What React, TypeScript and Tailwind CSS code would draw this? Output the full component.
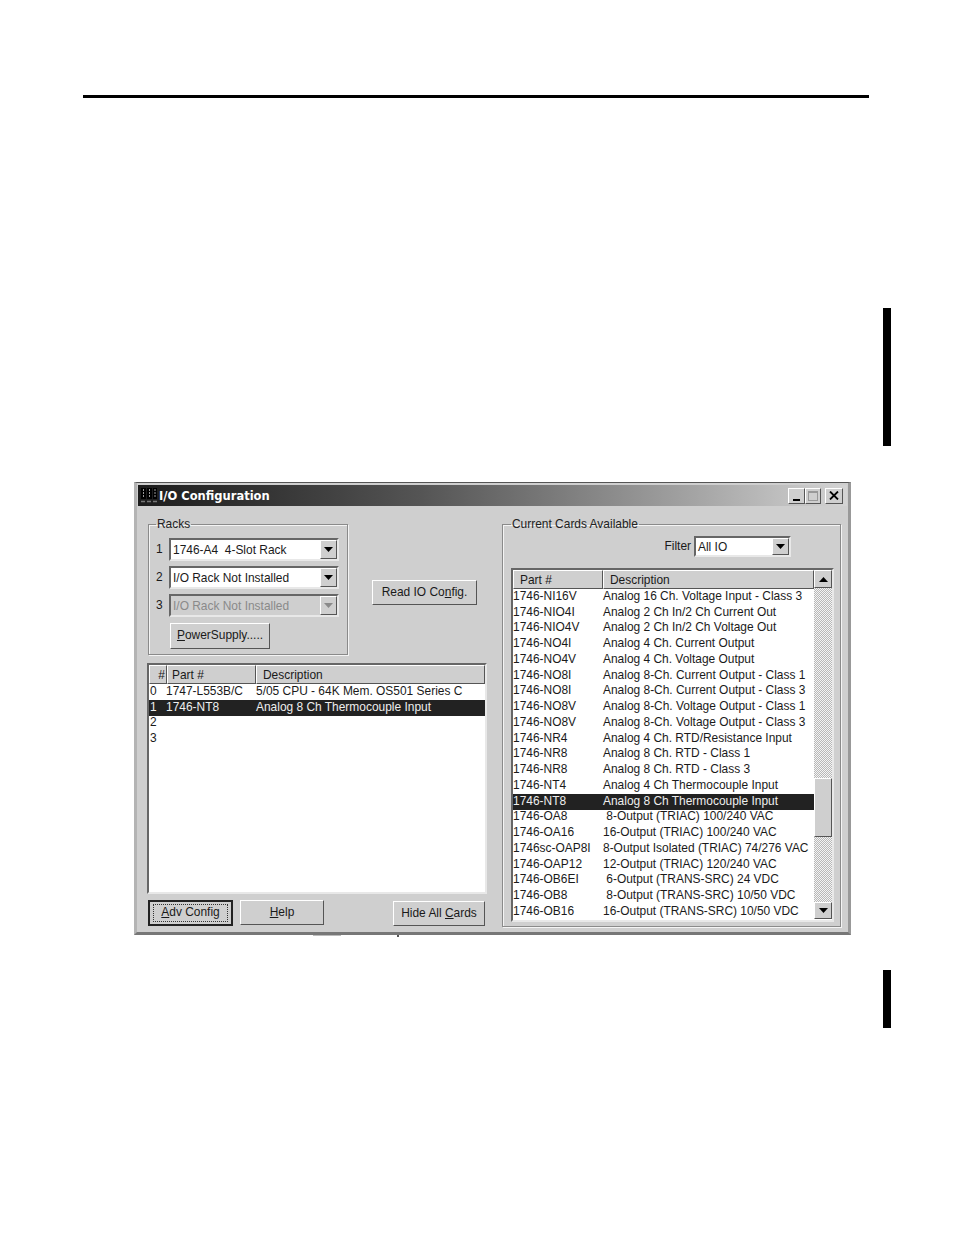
import React from 'react';

const raised = 'border border-t-white border-l-white border-r-[#555] border-b-[#555] bg-[#cfcfcf]';
const sunken = 'border-2 border-t-[#666] border-l-[#666] border-r-[#e8e8e8] border-b-[#e8e8e8]';

const cards: [string, string][] = [
  ['1746-NI16V', 'Analog 16 Ch. Voltage Input - Class 3'],
  ['1746-NIO4I', 'Analog 2 Ch In/2 Ch Current Out'],
  ['1746-NIO4V', 'Analog 2 Ch In/2 Ch Voltage Out'],
  ['1746-NO4I', 'Analog 4 Ch. Current Output'],
  ['1746-NO4V', 'Analog 4 Ch. Voltage Output'],
  ['1746-NO8I', 'Analog 8-Ch. Current Output - Class 1'],
  ['1746-NO8I', 'Analog 8-Ch. Current Output - Class 3'],
  ['1746-NO8V', 'Analog 8-Ch. Voltage Output - Class 1'],
  ['1746-NO8V', 'Analog 8-Ch. Voltage Output - Class 3'],
  ['1746-NR4', 'Analog 4 Ch. RTD/Resistance Input'],
  ['1746-NR8', 'Analog 8 Ch. RTD - Class 1'],
  ['1746-NR8', 'Analog 8 Ch. RTD - Class 3'],
  ['1746-NT4', 'Analog 4 Ch Thermocouple Input'],
  ['1746-NT8', 'Analog 8 Ch Thermocouple Input'],
  ['1746-OA8', '\u00a08-Output (TRIAC) 100/240 VAC'],
  ['1746-OA16', '16-Output (TRIAC) 100/240 VAC'],
  ['1746sc-OAP8I', '8-Output Isolated (TRIAC) 74/276 VAC'],
  ['1746-OAP12', '12-Output (TRIAC) 120/240 VAC'],
  ['1746-OB6EI', '\u00a06-Output (TRANS-SRC) 24 VDC'],
  ['1746-OB8', '\u00a08-Output (TRANS-SRC) 10/50 VDC'],
  ['1746-OB16', '16-Output (TRANS-SRC) 10/50 VDC'],
];

function Arrow({ up, color = '#000' }: { up?: boolean; color?: string }) {
  return (
    <svg width="9" height="5" viewBox="0 0 9 5">
      <path d={up ? 'M4.5 0 L9 5 L0 5 Z' : 'M0 0 L9 0 L4.5 5 Z'} fill={color} />
    </svg>
  );
}

function Combo({ text, disabled, className }: { text: string; disabled?: boolean; className: string }) {
  return (
    <div className={`${sunken} ${className} flex items-center ${disabled ? 'bg-[#cfcfcf] text-[#8a8a8a]' : 'bg-white'}`}>
      <span className="flex-1 pl-[2px] pt-[2px] whitespace-pre">{text}</span>
      <div className={`${raised} w-[17px] h-full flex items-center justify-center`}>
        <Arrow color={disabled ? '#8a8a8a' : '#000'} />
      </div>
    </div>
  );
}

function RackRow({ n, text, disabled }: { n: number; text: string; disabled?: boolean }) {
  return (
    <div className="flex items-center h-[23px]">
      <span className="w-[20px] pl-[7px]">{n}</span>
      <Combo text={text} disabled={disabled} className="w-[170px] h-[23px]" />
    </div>
  );
}

function WinButton({ children, className }: { children: React.ReactNode; className: string }) {
  return (
    <div className={`${raised} h-[16px] flex justify-center ${className}`}>{children}</div>
  );
}

function HeaderCell({ children, className }: { children: React.ReactNode; className: string }) {
  return <div className={`${raised} h-full pt-[2px] flex items-center whitespace-nowrap ${className}`}>{children}</div>;
}

export default function App() {
  return (
    <div className="w-[954px] h-[1235px] bg-white pt-[95px] overflow-hidden font-['Liberation_Sans',Arial,sans-serif] text-[11.95px] leading-none text-[#1a1a1a]">
      <div className="ml-[83px] w-[786px] h-[3px] bg-black" />
      <div className="flex">
        <div className="ml-[134px] mt-[384px] w-[717px]">
          <div className="h-[453px] bg-[#cfcfcf] border-t border-t-[#555] border-l-[3px] border-l-[#b4b4b4] border-r-[3px] border-r-[#999] border-b-[3px] border-b-[#777] flex flex-col">
            {/* title bar */}
            <div className="mx-[1px] mt-[2px] h-[21px] flex items-center bg-gradient-to-r from-[#1c1c1c] via-[#555] via-40% to-[#d4d4d4] pr-[4px]">
              <svg width="18" height="17" viewBox="0 0 18 17" className="ml-[2px] shrink-0">
                <path d="M1 1H6V12H1ZM7 1H12V12H7ZM13 1H17V12H13Z" fill="#000" />
                <path d="M3.5 2V11M9.5 2V11M15 2V11" stroke="#999" strokeWidth="1" strokeDasharray="2 1" />
                <path d="M1 14.5H5M7 14.5H11M13 14.5H17" stroke="#777" strokeWidth="1.5" />
              </svg>
              <span className="ml-[1px] pt-[2px] font-['DejaVu_Sans',sans-serif] font-bold text-[11.5px] text-white">I/O Configuration</span>
              <div className="ml-auto flex items-center">
                <WinButton className="w-[17px] items-end pb-[2px]">
                  <div className="w-[7px] h-[2px] bg-black" />
                </WinButton>
                <WinButton className="w-[16px] items-center">
                  <div className="w-[10px] h-[10px] border border-[#999] border-t-2" />
                </WinButton>
                <WinButton className="w-[18px] ml-[4px] items-center">
                  <svg width="10" height="9" viewBox="0 0 10 9">
                    <path d="M1 0.5 L9 8.5 M9 0.5 L1 8.5" stroke="#000" strokeWidth="1.8" />
                  </svg>
                </WinButton>
              </div>
            </div>

            <div className="flex-1 flex pl-[10px] pt-[11px]">
              {/* left side */}
              <div className="w-[340px] flex flex-col">
                <div className="flex">
                  <fieldset className="ml-[1px] w-[200px] h-[138px] border border-[#8a8a8a] shadow-[1px_1px_0_#f4f4f4,inset_1px_1px_0_#f4f4f4]">
                    <legend className="ml-[7px] px-[1px] h-[14px] leading-[15px] text-[#222]">Racks</legend>
                    <div className="flex flex-col gap-[5px] pt-[7px]">
                      <RackRow n={1} text="1746-A4  4-Slot Rack" />
                      <RackRow n={2} text="I/O Rack Not Installed" />
                      <RackRow n={3} text="I/O Rack Not Installed" disabled />
                    </div>
                    <div className={`${raised} ml-[21px] mt-[6px] w-[100px] h-[26px] flex items-center justify-center`}>
                      <span><u>P</u>owerSupply.....</span>
                    </div>
                  </fieldset>
                  <div className={`${raised} ml-[24px] mt-[63px] w-[105px] h-[25px] flex items-center justify-center`}>
                    <span>Read IO Co<u>n</u>fig.</span>
                  </div>
                </div>

                <div className={`${sunken} mt-[8px] h-[231px] bg-white flex flex-col`}>
                  <div className="h-[19px] flex shrink-0">
                    <HeaderCell className="w-[18px] justify-end pr-[1px]">#</HeaderCell>
                    <HeaderCell className="w-[89px] pl-[4px]">Part #</HeaderCell>
                    <HeaderCell className="flex-1 pl-[6px]">Description</HeaderCell>
                  </div>
                  <div className="h-[15.75px] flex items-center pl-[1px]">
                    <span className="w-[16px]">0</span>
                    <span className="w-[90px] whitespace-nowrap">1747-L553B/C</span>
                    <span className="whitespace-nowrap">5/05 CPU - 64K Mem. OS501 Series C</span>
                  </div>
                  <div className="h-[15.75px] flex items-center pl-[1px] bg-[#222] text-[#eee]">
                    <span className="w-[16px]">1</span>
                    <span className="w-[90px]">1746-NT8</span>
                    <span className="whitespace-nowrap">Analog 8 Ch Thermocouple Input</span>
                  </div>
                  <div className="h-[15.75px] flex items-center pl-[1px]">2</div>
                  <div className="h-[15.75px] flex items-center pl-[1px]">3</div>
                </div>

                <div className="flex mt-[6px]">
                  <div className="ml-[1px] w-[85px] h-[26px] border-2 border-[#222] bg-[#cfcfcf] flex items-center justify-center">
                    <div className="border border-dotted border-[#333] w-[75px] h-[18px] flex items-center justify-center">
                      <span><u>A</u>dv Config</span>
                    </div>
                  </div>
                  <div className={`${raised} ml-[7px] w-[84px] h-[25px] flex items-center justify-center`}>
                    <span><u>H</u>elp</span>
                  </div>
                  <div className={`${raised} ml-[69px] mt-[1px] w-[92px] h-[25px] flex items-center justify-center`}>
                    <span>Hide All <u>C</u>ards</span>
                  </div>
                </div>
              </div>

              {/* right side */}
              <fieldset className="ml-[15px] w-[339px] h-[410px] border border-[#8a8a8a] shadow-[1px_1px_0_#f4f4f4,inset_1px_1px_0_#f4f4f4]">
                <legend className="ml-[8px] px-[1px] h-[14px] leading-[15px] text-[#222]">Current Cards Available</legend>
                <div className="flex items-center justify-end pr-[49px] mt-[5px]">
                  <span className="mr-[3px]">Filter</span>
                  <Combo text="All IO" className="w-[97px] h-[21px]" />
                </div>
                <div className={`${sunken} ml-[8px] mt-[11px] w-[323px] h-[354px] bg-white flex`}>
                  <div className="flex-1 flex flex-col min-w-0">
                    <div className="h-[19px] flex shrink-0">
                      <HeaderCell className="w-[90px] pl-[6px]">Part #</HeaderCell>
                      <HeaderCell className="flex-1 pl-[6px]">Description</HeaderCell>
                    </div>
                    <div>
                      {cards.map(([part, desc], i) => (
                        <div
                          key={i}
                          className={`h-[15.75px] flex items-center whitespace-nowrap ${part === '1746-NT8' ? 'bg-[#222] text-[#eee]' : ''}`}
                        >
                          <span className="w-[90px] shrink-0">{part}</span>
                          <span>{desc}</span>
                        </div>
                      ))}
                    </div>
                  </div>
                  <div className="w-[18px] flex flex-col">
                    <div className={`${raised} h-[18px] flex items-center justify-center`}>
                      <Arrow up />
                    </div>
                    <div className="flex-1 bg-[repeating-conic-gradient(#b8b8b8_0%_25%,#f4f4f4_0%_50%)] bg-[length:2px_2px]">
                      <div className={`${raised} mt-[190px] h-[59px]`} />
                    </div>
                    <div className={`${raised} h-[17px] mb-[1px] flex items-center justify-center`}>
                      <Arrow />
                    </div>
                  </div>
                </div>
              </fieldset>
            </div>
          </div>
          <div className="flex items-start h-[3px]">
            <div className="ml-[179px] w-[28px] h-[1px] bg-[#bbb]" />
            <div className="ml-[56px] w-[2px] h-[2px] bg-[#555]" />
          </div>
        </div>
        <div className="ml-[32px] flex flex-col">
          <div className="mt-[210px] w-[8px] h-[138px] bg-black" />
          <div className="mt-[524px] w-[8px] h-[58px] bg-black" />
        </div>
      </div>
    </div>
  );
}
